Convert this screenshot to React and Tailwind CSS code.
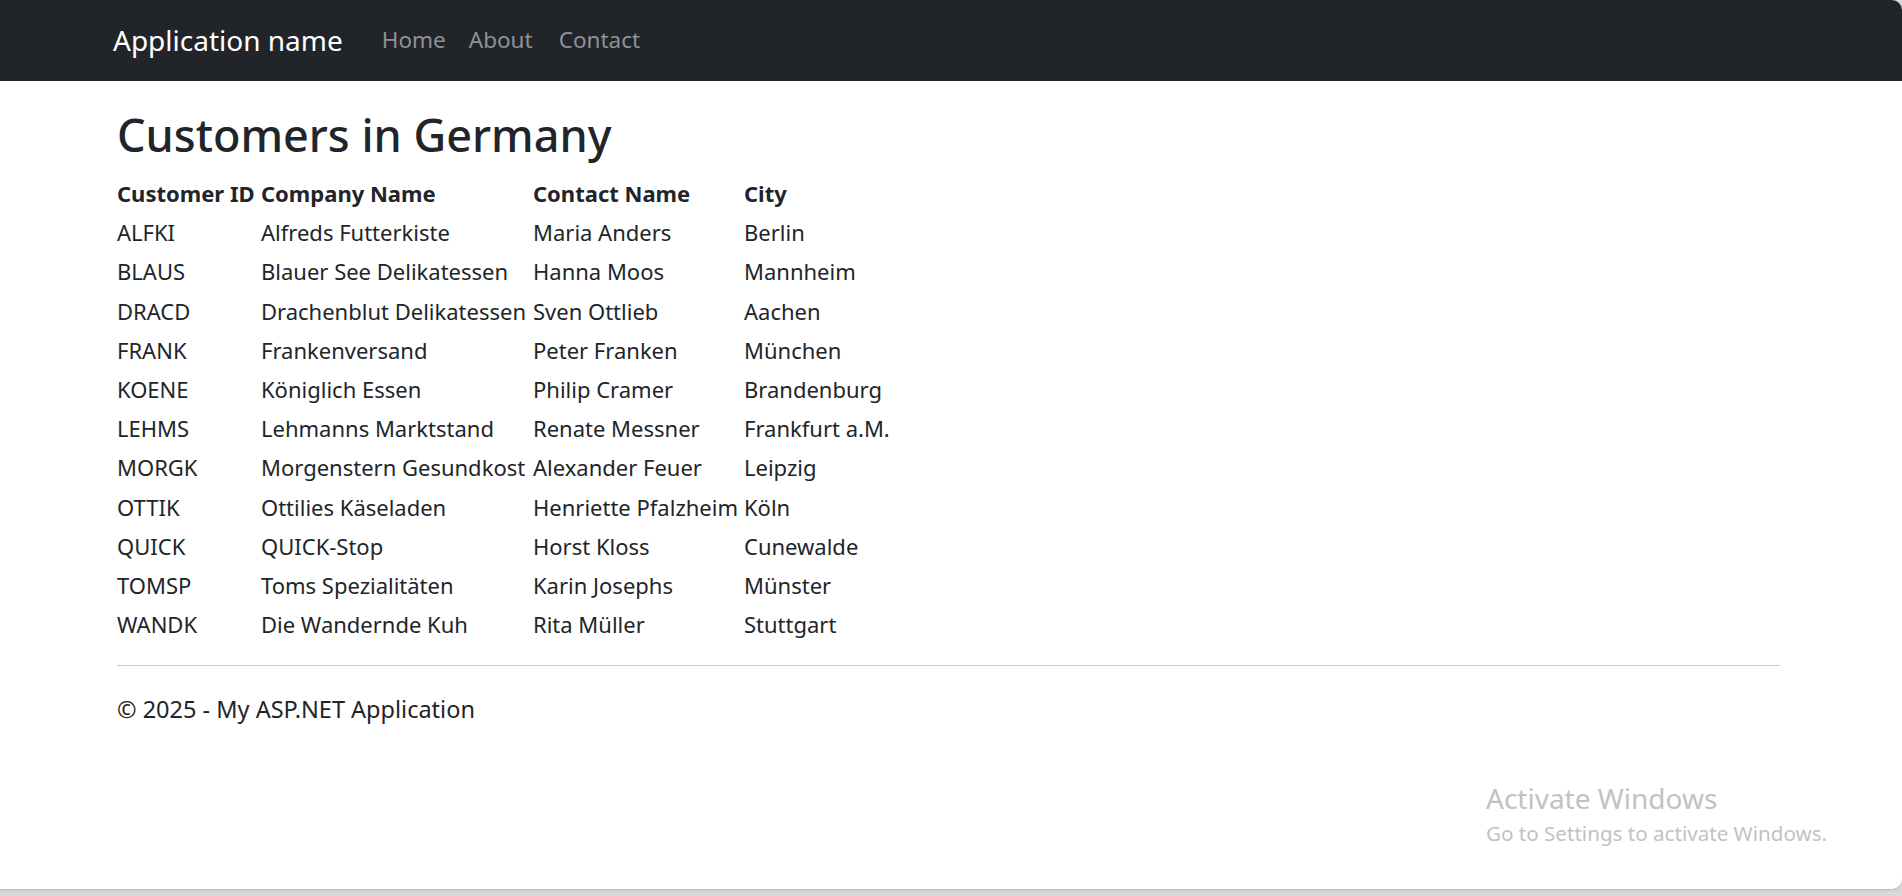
import React from 'react';

const customers = [
  ['ALFKI', 'Alfreds Futterkiste', 'Maria Anders', 'Berlin'],
  ['BLAUS', 'Blauer See Delikatessen', 'Hanna Moos', 'Mannheim'],
  ['DRACD', 'Drachenblut Delikatessen', 'Sven Ottlieb', 'Aachen'],
  ['FRANK', 'Frankenversand', 'Peter Franken', 'München'],
  ['KOENE', 'Königlich Essen', 'Philip Cramer', 'Brandenburg'],
  ['LEHMS', 'Lehmanns Marktstand', 'Renate Messner', 'Frankfurt a.M.'],
  ['MORGK', 'Morgenstern Gesundkost', 'Alexander Feuer', 'Leipzig'],
  ['OTTIK', 'Ottilies Käseladen', 'Henriette Pfalzheim', 'Köln'],
  ['QUICK', 'QUICK-Stop', 'Horst Kloss', 'Cunewalde'],
  ['TOMSP', 'Toms Spezialitäten', 'Karin Josephs', 'Münster'],
  ['WANDK', 'Die Wandernde Kuh', 'Rita Müller', 'Stuttgart'],
];

const App = () => {
  return (
    <div className="h-[896px] bg-[#d6d8dc] overflow-hidden font-['Segoe_UI','Noto_Sans',sans-serif] text-[#212529]">
      <div className="relative h-[889px] bg-white rounded-r-[10px] overflow-hidden shadow-[0_1px_2px_rgba(0,0,0,0.15)]">
        {/* Navbar */}
        <nav className="h-[81px] bg-[#212529] flex items-center pl-[113px] pb-[1px]">
          <a className="text-[28px] text-white leading-none mr-[39px]">Application name</a>
          <ul className="flex items-center text-[22.5px] text-[#8f9194] leading-none">
            <li>Home</li>
            <li className="ml-[23px]">About</li>
            <li className="ml-[26px]">Contact</li>
          </ul>
        </nav>

        <main className="pl-[117px] pr-[122px]">
          <h2 className="mt-[27px] mb-[12px] text-[45px] font-medium leading-[1.2]">Customers in Germany</h2>

          <div className="text-[22px] leading-[39.2px]">
            <div className="grid grid-cols-[144px_272px_211px_1fr] font-bold">
              <div>Customer ID</div>
              <div>Company Name</div>
              <div>Contact Name</div>
              <div>City</div>
            </div>
            {customers.map((c) => (
              <div key={c[0]} className="grid grid-cols-[144px_272px_211px_1fr] whitespace-nowrap">
                <div>{c[0]}</div>
                <div>{c[1]}</div>
                <div>{c[2]}</div>
                <div>{c[3]}</div>
              </div>
            ))}
          </div>

          <hr className="mt-[21px] border-t border-[#c8c9ca]" />

          <footer className="mt-[27px] text-[23.5px] leading-[33px]">
            <p>© 2025 - My ASP.NET Application</p>
          </footer>
        </main>

        {/* Windows activation watermark */}
        <div className="absolute left-[1486px] top-[784px] text-[#c2c2c2] pointer-events-none">
          <div className="text-[28px] leading-none">Activate Windows</div>
          <div className="mt-[11px] text-[20.6px] leading-none">Go to Settings to activate Windows.</div>
        </div>
      </div>
    </div>
  );
};

export default App;
